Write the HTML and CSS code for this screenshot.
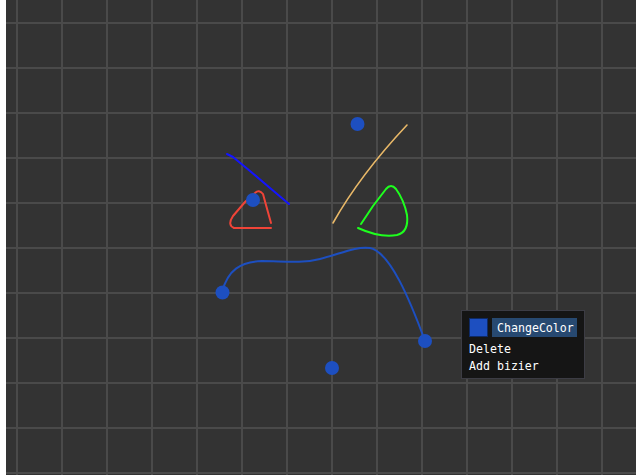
FILE: index.html
```html
<!DOCTYPE html>
<html>
<head>
<meta charset="utf-8">
<link rel="stylesheet" href="styles.css">
</head>
<body>
<div class="canvas">
  <svg class="drawing" width="630" height="475" viewBox="6 0 630 475">
    <path class="stroke blue-line" d="M227,154 L233,157 L250,171 L270,188 L289,204"/>
    <path class="stroke red" d="M271,223 L266,205 L263,194 Q259,189 255,193 L245,202 L233,216 Q227,225 234,228 L271,228"/>
    <path class="stroke tan" d="M333,223 Q360,175 407,125"/>
    <path class="stroke green" d="M361,224 L373,206 L386,189 Q391,183 396,189 Q404,200 407,215 Q409,232 397,235 Q380,238 358,228"/>
    <path class="stroke bezier" d="M222,292 C228,270 240,262 262,261 C282,261 300,264 320,259 C340,254 356,246 370,248 C390,252 410,300 425,341"/>
    <circle class="pt" cx="357.5" cy="124" r="7"/>
    <circle class="pt" cx="253" cy="200" r="7"/>
    <circle class="pt" cx="222.5" cy="292.5" r="7"/>
    <circle class="pt" cx="425" cy="341" r="7"/>
    <circle class="pt" cx="332" cy="368" r="7"/>
  </svg>
  <div class="popup">
    <div class="popup-row">
      <span class="swatch"></span>
      <span class="btn">ChangeColor</span>
    </div>
    <div class="item first">Delete</div>
    <div class="item">Add bizier</div>
  </div>
</div>
</body>
</html>
```
FILE: styles.css
```css
html, body {
  margin: 0;
  padding: 0;
  background: #ffffff;
  overflow: hidden;
}
.canvas {
  position: relative;
  margin-left: 6px;
  width: 630px;
  height: 475px;
  background-color: #333333;
  background-image:
    linear-gradient(to right, #4a4a4a 0, #4a4a4a 2px, transparent 2px),
    linear-gradient(to bottom, #4a4a4a 0, #4a4a4a 2px, transparent 2px);
  background-size: 45px 45px;
  background-position: 10px 22px;
}
.drawing {
  position: absolute;
  left: 0;
  top: 0;
}
.stroke {
  fill: none;
  stroke-linecap: round;
  stroke-linejoin: round;
}
.blue-line { stroke: #1414ff; stroke-width: 2; }
.red { stroke: #f04438; stroke-width: 2; }
.tan { stroke: #e8b868; stroke-width: 1.6; }
.green { stroke: #1eff1e; stroke-width: 2; }
.bezier { stroke: #1d4fc0; stroke-width: 2; }
.pt { fill: #1d4fc0; }
.popup {
  position: absolute;
  left: 455px;
  top: 310px;
  width: 108px;
  padding: 7px 7px 5px 7px;
  border: 1px solid #3c3c44;
  background: #151515;
  display: flex;
  flex-direction: column;
  gap: 4px;
  font-family: "DejaVu Sans Mono", "Liberation Mono", monospace;
  font-size: 11.6px;
  color: #ffffff;
}
.popup-row {
  display: flex;
  gap: 4px;
  height: 19px;
}
.swatch {
  width: 17px;
  height: 17px;
  background: #1d4fc0;
  border: 1px solid #0e2a66;
}
.btn {
  flex: 1;
  background: #274971;
  line-height: 19px;
  padding-left: 5px;
  padding-top: 1px;
  height: 18px;
}
.item {
  line-height: 13px;
  height: 13px;
  white-space: pre;
}
.item.first {
  margin-top: 2px;
}
```
